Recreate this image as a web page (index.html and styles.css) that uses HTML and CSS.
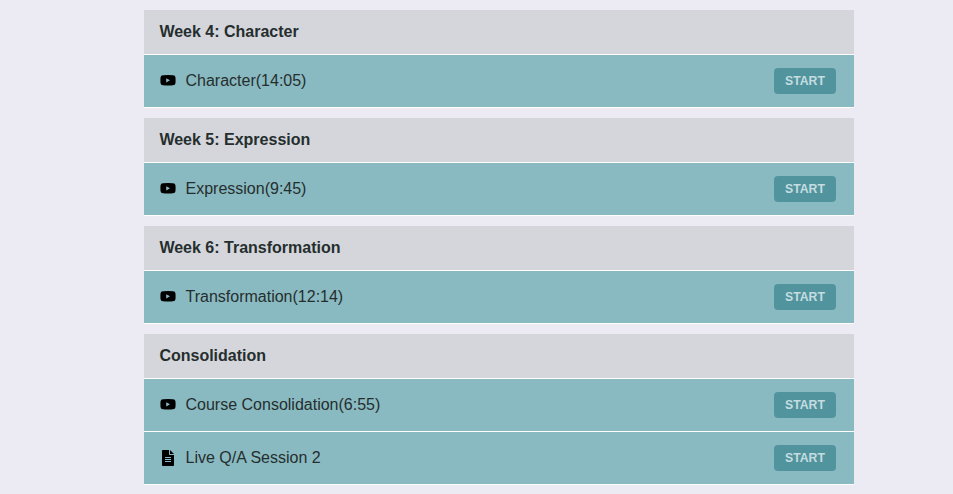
FILE: index.html
```
<!DOCTYPE html>
<html lang="en">
<head>
  <meta charset="UTF-8">
  <meta name="viewport" content="width=device-width, initial-scale=1.0">
  <title>Course Curriculum</title>
  <link rel="stylesheet" href="styles.css">
</head>
<body>
  <!-- Shared icons -->
  <svg class="icon-defs" width="0" height="0">
    <symbol id="icon-video" viewBox="0 0 16 16">
      <path fill-rule="evenodd" d="M3 2.2Q8 1.8 13 2.2Q15.3 2.3 15.5 4.5Q15.7 7.2 15.5 10Q15.3 12.2 13 12.3Q8 12.7 3 12.3Q.7 12.2 .5 10Q.3 7.2 .5 4.5Q.7 2.3 3 2.2ZM6.2 5.2V9.4L10 7.3Z"/>
    </symbol>
    <symbol id="icon-text" viewBox="0 0 16 16">
      <path fill-rule="evenodd" d="M2 .8Q2 0 2.8 0H9V4Q9 5 10 5H14V15.2Q14 16 13.2 16H2.8Q2 16 2 15.2ZM5 7V8H11V7ZM5 9V10H11V9ZM5 11V12H11V11Z"/>
      <path d="M10 0L14 4H10Z"/>
    </symbol>
  </svg>

  <main class="curriculum">
    <section class="course-section">
      <h2 class="section-title">Week 4: Character</h2>
      <ul class="section-list">
        <li class="section-item">
          <svg class="item-icon"><use href="#icon-video"/></svg>
          <span class="item-name">Character(14:05)</span>
          <a class="btn-start" href="#">START</a>
        </li>
      </ul>
    </section>

    <section class="course-section">
      <h2 class="section-title">Week 5: Expression</h2>
      <ul class="section-list">
        <li class="section-item">
          <svg class="item-icon"><use href="#icon-video"/></svg>
          <span class="item-name">Expression(9:45)</span>
          <a class="btn-start" href="#">START</a>
        </li>
      </ul>
    </section>

    <section class="course-section">
      <h2 class="section-title">Week 6: Transformation</h2>
      <ul class="section-list">
        <li class="section-item">
          <svg class="item-icon"><use href="#icon-video"/></svg>
          <span class="item-name">Transformation(12:14)</span>
          <a class="btn-start" href="#">START</a>
        </li>
      </ul>
    </section>

    <section class="course-section">
      <h2 class="section-title">Consolidation</h2>
      <ul class="section-list">
        <li class="section-item">
          <svg class="item-icon"><use href="#icon-video"/></svg>
          <span class="item-name">Course Consolidation(6:55)</span>
          <a class="btn-start" href="#">START</a>
        </li>
        <li class="section-item">
          <svg class="item-icon"><use href="#icon-text"/></svg>
          <span class="item-name">Live Q/A Session 2</span>
          <a class="btn-start" href="#">START</a>
        </li>
      </ul>
    </section>
  </main>
</body>
</html>
```

FILE: styles.css
```
* {
  margin: 0;
  padding: 0;
  box-sizing: border-box;
}

body {
  font-family: "Liberation Sans", Arial, sans-serif;
  font-size: 16px;
  background: #ecebf4;
  color: #252e2e;
}

.icon-defs {
  display: none;
}

.curriculum {
  width: 710px;
  margin-left: 144px;
  padding-top: 10px;
}

.course-section {
  margin-bottom: 10px;
}

.course-section:last-child {
  margin-bottom: 0;
}

.section-title {
  height: 45px;
  padding: 0 15.4px;
  border-bottom: 1px solid #fff;
  background: #d5d6db;
  font-size: 16px;
  font-weight: bold;
  line-height: 44px;
}

.section-list {
  list-style: none;
}

.section-item {
  display: flex;
  align-items: center;
  height: 53px;
  padding: 0 18px 0 16px;
  border-bottom: 1px solid #fff;
  background: #8abac1;
}

.item-icon {
  width: 16px;
  height: 16px;
  margin-right: 9.5px;
  fill: #000;
}

.item-name {
  flex: 1;
}

.btn-start {
  width: 62px;
  height: 26px;
  border-radius: 4px;
  background: #52949e;
  color: #c5dde0;
  font-size: 12.25px;
  font-weight: bold;
  line-height: 26px;
  text-align: center;
  text-decoration: none;
}
```
